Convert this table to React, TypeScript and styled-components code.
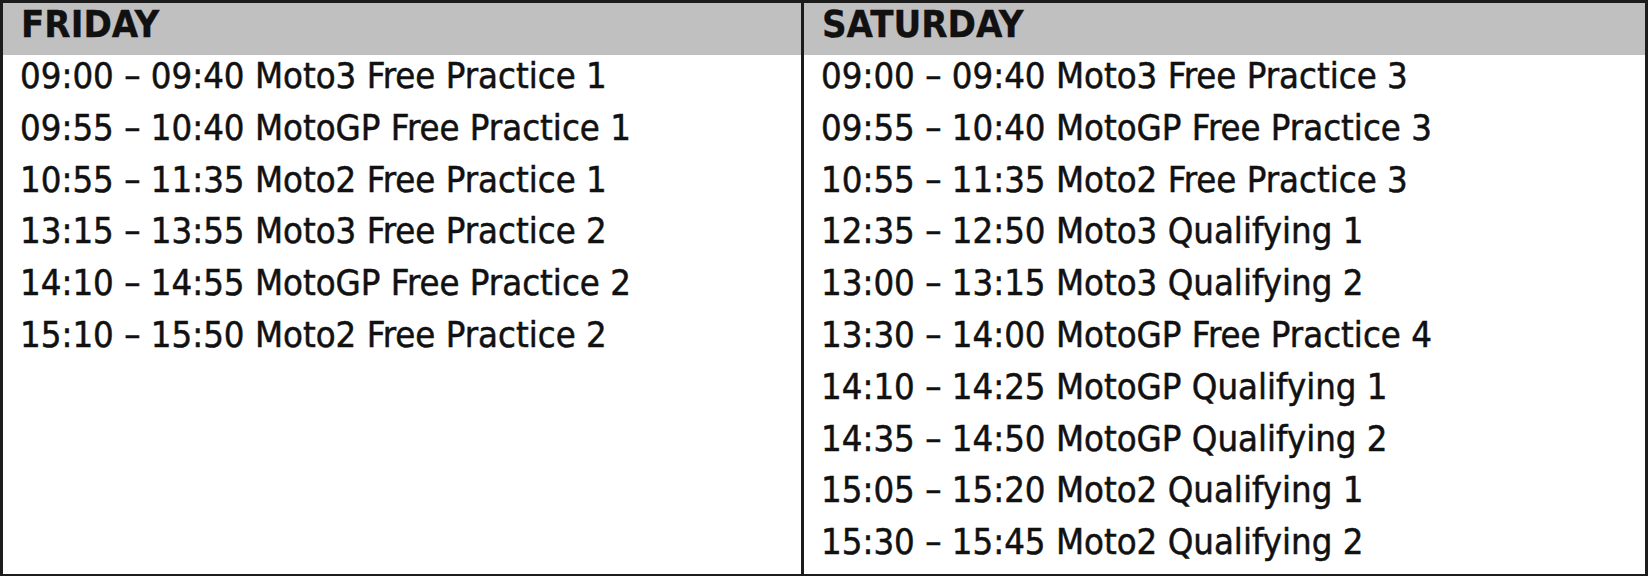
import styled, { createGlobalStyle } from 'styled-components'

const GlobalStyle = createGlobalStyle`
  html, body {
    margin: 0;
    padding: 0;
    background: #ffffff;
  }
  body {
    font-family: "DejaVu Sans Condensed", "DejaVu Sans", sans-serif;
    color: #111111;
  }
`

interface DaySchedule {
  day: string
  sessions: string[]
}

const days: DaySchedule[] = [
  {
    day: 'FRIDAY',
    sessions: [
      '09:00 – 09:40 Moto3 Free Practice 1',
      '09:55 – 10:40 MotoGP Free Practice 1',
      '10:55 – 11:35 Moto2 Free Practice 1',
      '13:15 – 13:55 Moto3 Free Practice 2',
      '14:10 – 14:55 MotoGP Free Practice 2',
      '15:10 – 15:50 Moto2 Free Practice 2'
    ]
  },
  {
    day: 'SATURDAY',
    sessions: [
      '09:00 – 09:40 Moto3 Free Practice 3',
      '09:55 – 10:40 MotoGP Free Practice 3',
      '10:55 – 11:35 Moto2 Free Practice 3',
      '12:35 – 12:50 Moto3 Qualifying 1',
      '13:00 – 13:15 Moto3 Qualifying 2',
      '13:30 – 14:00 MotoGP Free Practice 4',
      '14:10 – 14:25 MotoGP Qualifying 1',
      '14:35 – 14:50 MotoGP Qualifying 2',
      '15:05 – 15:20 Moto2 Qualifying 1',
      '15:30 – 15:45 Moto2 Qualifying 2'
    ]
  }
]

export default function App() {
  return (
    <>
      <GlobalStyle />
      <Schedule>
        {days.map((d, i) => (
          <DayColumn key={d.day} $width={i === 0 ? 798 : 841} $divider={i === 0}>
            <DayHeader>{d.day}</DayHeader>
            {d.sessions.map((s) => (
              <SessionRow key={s}>{s}</SessionRow>
            ))}
          </DayColumn>
        ))}
      </Schedule>
    </>
  )
}

const Schedule = styled.div`
  width: 1648px;
  height: 576px;
  box-sizing: border-box;
  border: 3px solid #1c1c1c;
  border-bottom-width: 2px;
  display: flex;
  overflow: hidden;
`

const DayColumn = styled.div<{ $width: number; $divider: boolean }>`
  width: ${(p) => p.$width}px;
  flex: none;
  display: flex;
  flex-direction: column;
  border-right: ${(p) => (p.$divider ? '3px solid #1c1c1c' : 'none')};
`

const DayHeader = styled.div`
  height: 52px;
  flex: none;
  background: #c0c0c0;
  padding-left: 18px;
  font-weight: 700;
  font-size: 38px;
  line-height: 43px;
  color: #111111;
  white-space: nowrap;
  -webkit-text-stroke: 0.3px #111111;
`

const SessionRow = styled.div`
  height: 51.8px;
  flex: none;
  padding-left: 17px;
  font-size: 36.2px;
  line-height: 41.5px;
  color: #111111;
  white-space: nowrap;
  -webkit-text-stroke: 0.5px #111111;
`
